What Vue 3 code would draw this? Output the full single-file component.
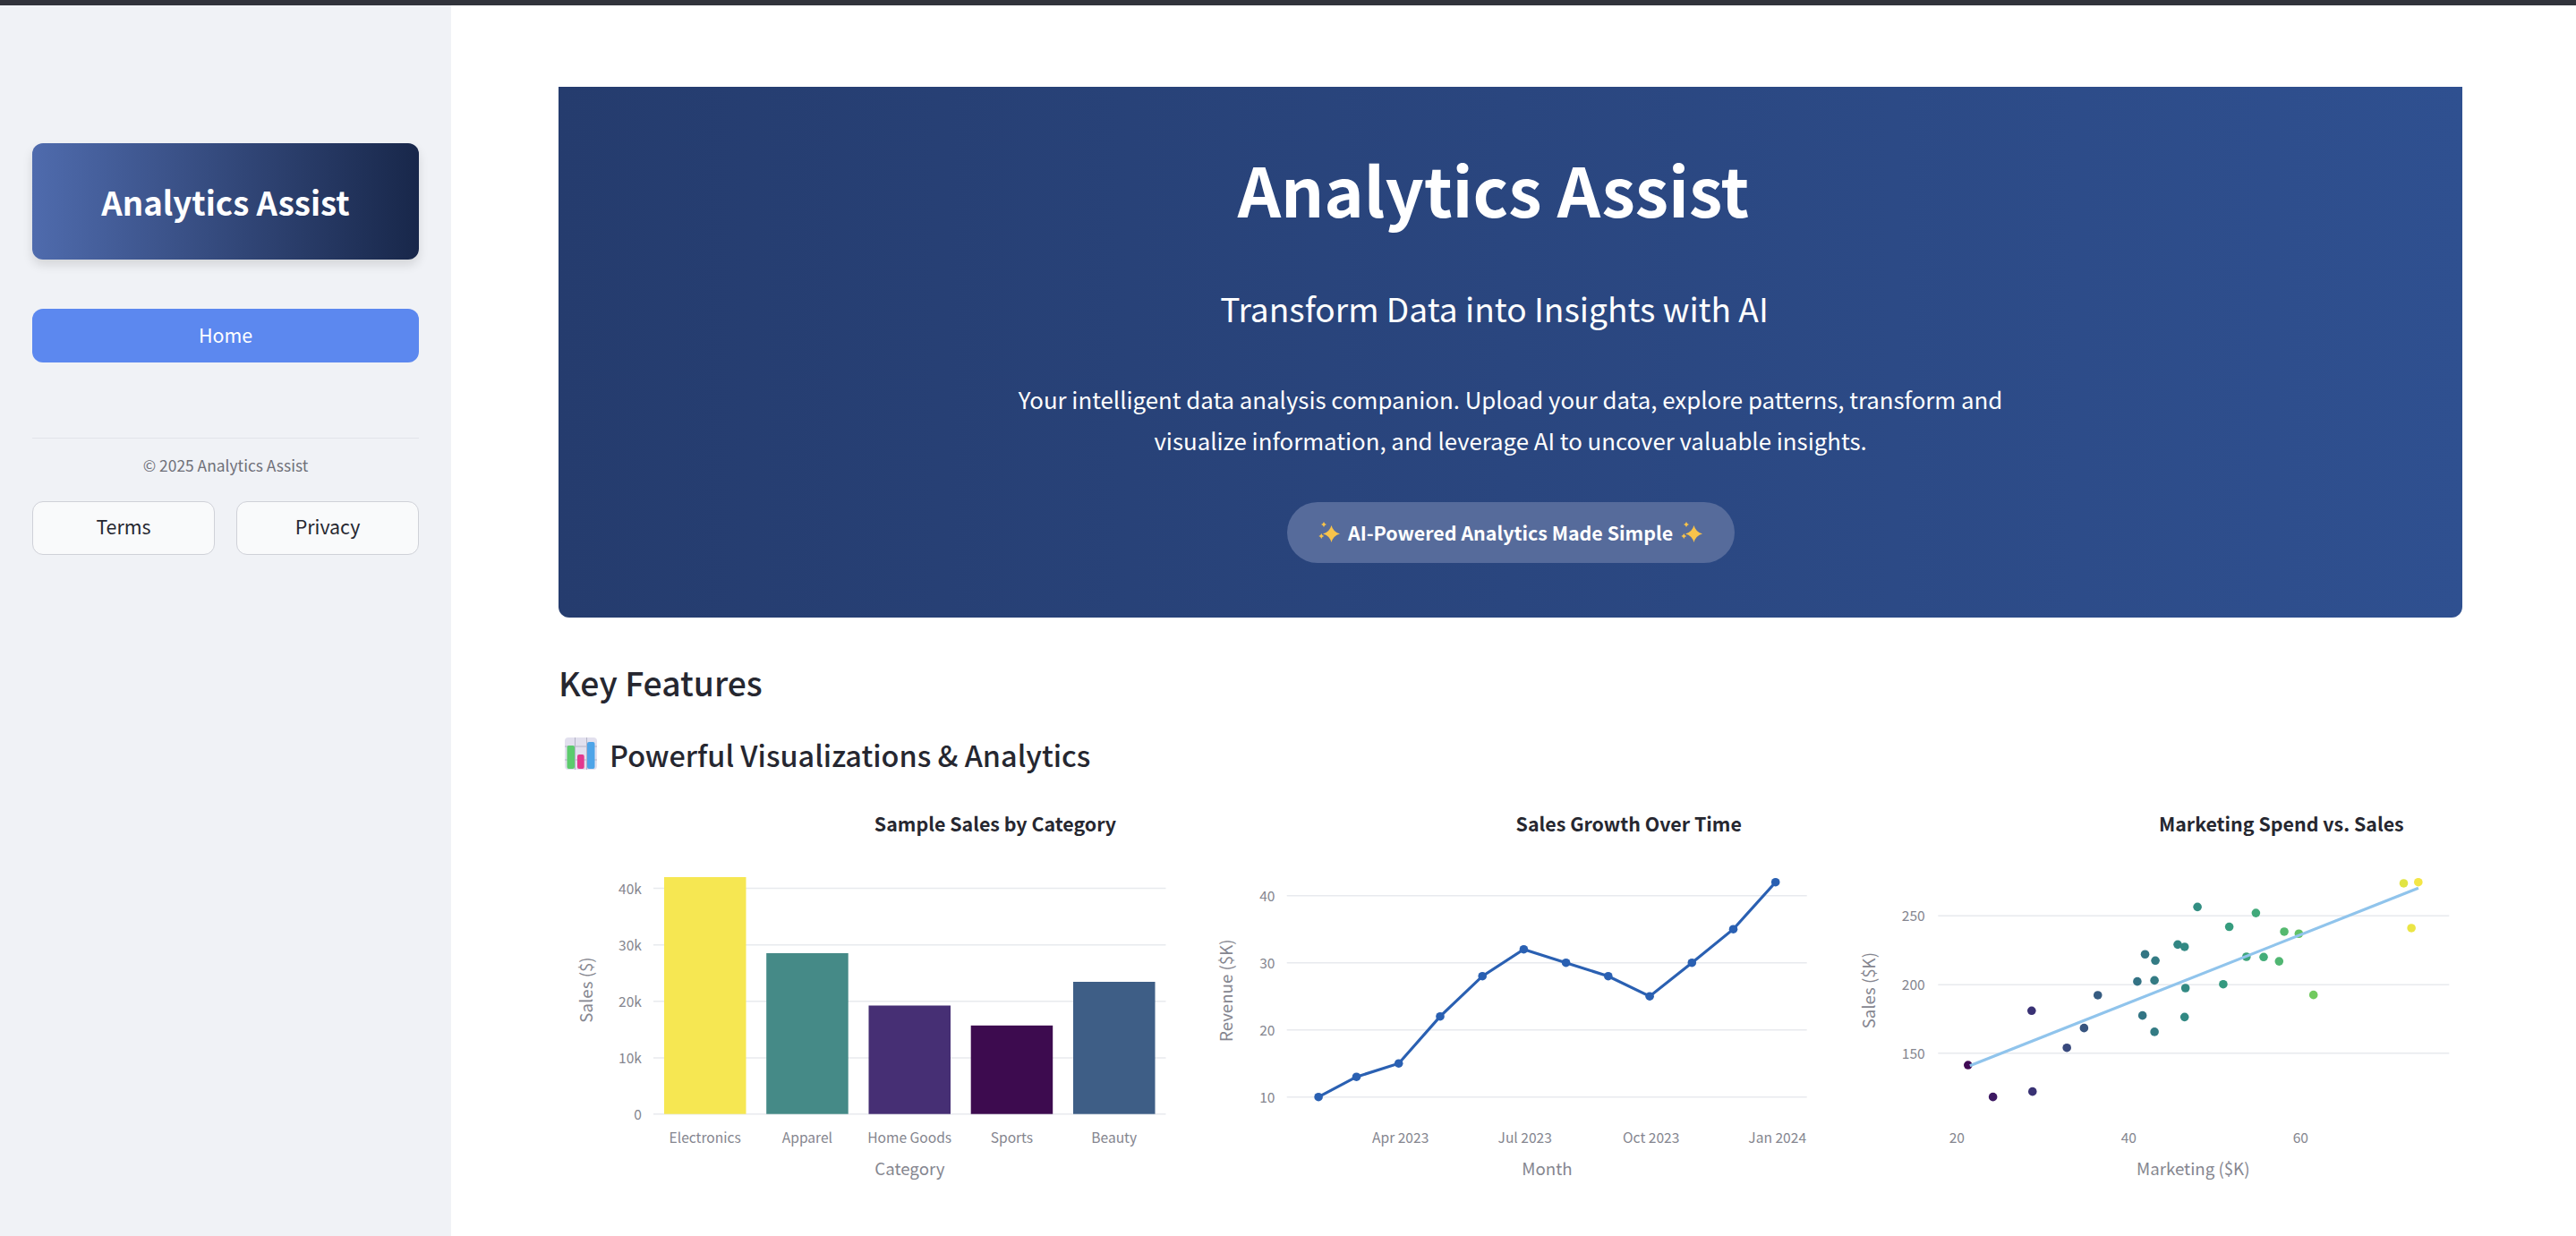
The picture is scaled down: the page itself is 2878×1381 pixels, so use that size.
<template>
  <div class="page">
    <div class="topbar"></div>
    <div class="shell">
      <aside class="sidebar">
        <div class="logo">Analytics Assist</div>
        <button class="nav-home">Home</button>
        <div class="side-foot">
          <p class="copy">© 2025 Analytics Assist</p>
          <div class="links">
            <button class="link-btn">Terms</button>
            <button class="link-btn">Privacy</button>
          </div>
        </div>
      </aside>

      <main class="main">
        <section class="hero">
          <h1>Analytics Assist</h1>
          <h2>Transform Data into Insights with AI</h2>
          <p>Your intelligent data analysis companion. Upload your data, explore patterns, transform and<br />visualize information, and leverage AI to uncover valuable insights.</p>
          <div class="pill">
            <svg class="spark" viewBox="0 0 24 23"><path v-for="(d, i) in sparkPaths" :key="i" :d="d" fill="#f8c34a" /></svg>
            <span>AI-Powered Analytics Made Simple</span>
            <svg class="spark" viewBox="0 0 24 23"><path v-for="(d, i) in sparkPaths" :key="i" :d="d" fill="#f8c34a" /></svg>
          </div>
        </section>

        <h3 class="key">Key Features</h3>
        <div class="sub">
          <svg class="sub-icon" viewBox="0 0 36 36">
            <rect width="36" height="36" rx="4" fill="#e2e0ee" />
            <path d="M0 10H36M0 25H36M11.5 0V36M24.5 0V36" stroke="#b4b4c6" stroke-width="1" />
            <rect x="2.5" y="9" width="8.5" height="26" rx="2" fill="#5ccb6d" />
            <rect x="14" y="19" width="7.7" height="16" rx="2" fill="#e2398f" />
            <rect x="25" y="5" width="8.5" height="30" rx="2" fill="#4ea4e8" />
          </svg>
          <span>Powerful Visualizations &amp; Analytics</span>
        </div>

        <div class="charts">
          <svg class="chart" viewBox="0 0 698.33 430">
            <text class="title" x="488" y="29.5">Sample Sales by Category</text>
            <line v-for="t in barTicks" :key="t.label" class="grid" x1="106" x2="678.5" :y1="t.y" :y2="t.y" />
            <text v-for="t in barTicks" :key="t.label + 't'" class="tick end" x="93" :y="t.y + 6">{{ t.label }}</text>
            <g v-for="b in bars" :key="b.label">
              <rect :x="b.x" :y="b.y" width="91.5" :height="344.7 - b.y" :fill="b.fill" />
              <text class="tick" :x="b.x + 45.7" y="377.5">{{ b.label }}</text>
            </g>
            <text class="axis" x="392.4" y="413">Category</text>
            <text class="axis" transform="translate(38 206) rotate(-90)">Sales ($)</text>
          </svg>

          <svg class="chart" viewBox="0 0 698.33 430">
            <text class="title" x="481.7" y="29.5">Sales Growth Over Time</text>
            <line v-for="t in lineTicks" :key="t.label" class="grid" x1="99.7" x2="680.7" :y1="t.y" :y2="t.y" />
            <text v-for="t in lineTicks" :key="t.label + 't'" class="tick end" x="86.5" :y="t.y + 6">{{ t.label }}</text>
            <polyline :points="linePoints" fill="none" stroke="#2a60b2" stroke-width="3.2" />
            <circle v-for="p in linePts" :key="p[0]" :cx="p[0]" :cy="p[1]" r="4.8" fill="#2a60b2" />
            <text v-for="t in monthTicks" :key="t.label" class="tick" :x="t.x" y="377.5">{{ t.label }}</text>
            <text class="axis" x="390.4" y="413">Month</text>
            <text class="axis" transform="translate(39 206.7) rotate(-90)">Revenue ($K)</text>
          </svg>

          <svg class="chart" viewBox="0 0 698.33 430">
            <text class="title" x="495.8" y="29.5">Marketing Spend vs. Sales</text>
            <line v-for="t in scatterTicks" :key="t.label" class="grid" x1="112.3" x2="683.3" :y1="t.y" :y2="t.y" />
            <text v-for="t in scatterTicks" :key="t.label + 't'" class="tick end" x="97.7" :y="t.y + 6">{{ t.label }}</text>
            <circle v-for="(d, i) in dots" :key="i" :cx="d.x" :cy="d.y" r="4.8" :fill="d.fill" />
            <line x1="147.8" y1="290.7" x2="648.9" y2="92.3" stroke="#90c4ec" stroke-width="3.2" />
            <text v-for="t in mktTicks" :key="t.label" class="tick" :x="t.x" y="377.5">{{ t.label }}</text>
            <text class="axis" x="397.3" y="413">Marketing ($K)</text>
            <text class="axis" transform="translate(42 206.7) rotate(-90)">Sales ($K)</text>
          </svg>
        </div>
      </main>
    </div>
  </div>
</template>

<script setup>
const sparkPaths = [
  'M14.5 4Q16.5 11.5 24 13.5Q16.5 15.5 14.5 23Q12.5 15.5 5 13.5Q12.5 11.5 14.5 4Z',
  'M6 0Q6.7 2.3 9 3Q6.7 3.7 6 6Q5.3 3.7 3 3Q5.3 2.3 6 0Z',
  'M3.3 13Q4 15.3 6.3 16Q4 16.7 3.3 19Q2.6 16.7 0.3 16Q2.6 15.3 3.3 13Z'
]

const barTicks = [
  { label: '40k', y: 92.6 },
  { label: '30k', y: 155.7 },
  { label: '20k', y: 218.8 },
  { label: '10k', y: 282 },
  { label: '0', y: 344.7 }
]
const bars = [
  { label: 'Electronics', x: 118, y: 80, fill: '#f6e752' },
  { label: 'Apparel', x: 232.2, y: 165, fill: '#458a87' },
  { label: 'Home Goods', x: 346.5, y: 223.5, fill: '#462f74' },
  { label: 'Sports', x: 460.7, y: 245.8, fill: '#3d0b4f' },
  { label: 'Beauty', x: 575, y: 197, fill: '#3e5e86' }
]

const lineTicks = [
  { label: '40', y: 100.7 },
  { label: '30', y: 175.7 },
  { label: '20', y: 250.7 },
  { label: '10', y: 325.7 }
]
const monthTicks = [
  { label: 'Apr 2023', x: 226.7 },
  { label: 'Jul 2023', x: 365.7 },
  { label: 'Oct 2023', x: 506.7 },
  { label: 'Jan 2024', x: 647.7 }
]
const revenue = [10, 13, 15, 22, 28, 32, 30, 28, 25, 30, 35, 42]
const monthX = [135.1, 177.5, 224.7, 271, 318.2, 364.4, 411.6, 458.8, 505.1, 552.3, 598.5, 645.7]
const linePts = revenue.map((v, i) => [monthX[i], 325.7 - (v - 10) * 7.5])
const linePoints = linePts.map((p) => p.join(',')).join(' ')

const scatterTicks = [
  { label: '250', y: 123.3 },
  { label: '200', y: 200.3 },
  { label: '150', y: 276.7 }
]
const mktTicks = [
  { label: '20', x: 133.3 },
  { label: '40', x: 325.3 },
  { label: '60', x: 517.3 }
]
const sales = [
  [21.3, 141.3], [24.2, 118.1], [28.7, 180.9], [28.8, 122], [32.8, 153.9], [34.8, 168.3],
  [36.4, 192.2], [41, 202.2], [41.6, 177.4], [41.9, 222], [43, 165.5], [43, 203],
  [43.1, 217.4], [45.7, 229.1], [46.5, 227.4], [46.5, 176.3], [46.6, 197.4], [48, 256.5],
  [51, 200.2], [51.7, 242], [53.7, 220.2], [54.8, 252.1], [55.7, 220], [57.5, 216.9],
  [58.1, 238.5], [59.8, 237], [61.5, 192.4], [72, 273.7], [72.9, 241.1], [73.7, 274.5]
]

const viridis = [
  [64, 10, 84], [58, 40, 112], [56, 74, 125], [52, 104, 132], [50, 130, 132],
  [50, 150, 128], [70, 175, 120], [118, 205, 92], [180, 222, 60], [244, 230, 70]
]
function viridisAt(t) {
  const pos = t * (viridis.length - 1)
  const i = Math.min(Math.floor(pos), viridis.length - 2)
  const f = pos - i
  const c = viridis[i].map((v, k) => Math.round(v + (viridis[i + 1][k] - v) * f))
  return `rgb(${c.join(',')})`
}
const dots = sales.map(([m, s]) => ({
  x: 133.3 + (m - 20) * 9.6,
  y: 123.3 + (250 - s) * 1.534,
  fill: viridisAt((m - 21.3) / (73.7 - 21.3))
}))
</script>

<style>
html,
body {
  margin: 0;
  background: #fff;
  overflow: hidden;
}
</style>

<style scoped>
.page {
  height: 100vh;
  display: flex;
  flex-direction: column;
  font-family: "Noto Sans CJK SC", "Noto Sans", sans-serif;
  color: #262730;
}

.topbar {
  height: 6px;
  flex: none;
  background: #31333b;
}

.shell {
  flex: 1;
  display: flex;
  min-height: 0;
}

.sidebar {
  width: 504px;
  flex: none;
  box-sizing: border-box;
  padding: 154px 36px 0;
  background: #f0f2f6;
}

.logo {
  height: 130px;
  display: flex;
  align-items: center;
  justify-content: center;
  border-radius: 12px;
  background: linear-gradient(90deg, #4f6bad, #18274a);
  box-shadow: 0 6px 12px rgba(0, 0, 0, 0.12);
  color: #fff;
  font-size: 36.6px;
  font-weight: 700;
}

button {
  font-family: inherit;
  cursor: pointer;
}

.nav-home {
  display: block;
  width: 100%;
  height: 60px;
  margin-top: 55px;
  padding-bottom: 4px;
  border: 0;
  border-radius: 12px;
  background: #5c88ef;
  color: #fff;
  font-size: 21.4px;
  line-height: 1;
}

.side-foot {
  margin-top: 84px;
  border-top: 1px solid #e2e4ea;
}

.copy {
  margin: 16px 0 0;
  height: 28px;
  line-height: 28px;
  text-align: center;
  font-size: 17.4px;
  color: #6f7079;
}

.links {
  display: flex;
  gap: 24px;
  margin-top: 26px;
}

.link-btn {
  flex: 1;
  height: 60px;
  padding-bottom: 7px;
  border: 1px solid #cfd1d8;
  border-radius: 12px;
  background: #f9fafb;
  color: #262730;
  font-size: 21.4px;
}

.main {
  flex: 1;
  min-width: 0;
  box-sizing: border-box;
  padding: 91px 127px 0 120px;
}

.hero {
  height: 593px;
  box-sizing: border-box;
  padding-top: 64px;
  border-radius: 0 0 12px 12px;
  background: linear-gradient(90deg, #253c6e, #2f5090);
  color: #fff;
  text-align: center;
}

.hero h1 {
  margin: 0;
  padding-right: 38px;
  height: 100px;
  line-height: 100px;
  font-size: 75.4px;
  font-weight: 700;
}

.hero h2 {
  margin: 53px 0 0;
  padding-right: 36px;
  height: 60px;
  line-height: 60px;
  font-size: 37.1px;
  font-weight: 400;
}

.hero p {
  margin: 49px 0 0;
  line-height: 45.5px;
  font-size: 25.8px;
}

.pill {
  display: flex;
  align-items: center;
  justify-content: center;
  gap: 9px;
  width: 500px;
  height: 68px;
  margin: 47px auto 0;
  padding-bottom: 2px;
  box-sizing: border-box;
  border-radius: 34px;
  background: #566b9b;
  font-size: 21.4px;
  font-weight: 700;
}

.spark {
  width: 24px;
  height: 23px;
}

.key {
  margin: 44px 0 0;
  height: 56px;
  line-height: 56px;
  font-size: 37.3px;
  font-weight: 500;
}

.sub {
  display: flex;
  align-items: center;
  gap: 14px;
  margin-top: 30px;
  padding-left: 7px;
  height: 44px;
  font-size: 32.4px;
  font-weight: 500;
}

.sub-icon {
  width: 36px;
  height: 36px;
  flex: none;
}

.charts {
  display: flex;
  gap: 16px;
  margin-top: 36px;
}

.chart {
  flex: 1;
  min-width: 0;
  height: 430px;
  font-family: "Noto Sans CJK SC", "Noto Sans", sans-serif;
}

.grid {
  stroke: #e8eaee;
  stroke-width: 1.5;
}

.title {
  text-anchor: middle;
  font-size: 21.4px;
  font-weight: 700;
  fill: #262730;
}

.tick {
  text-anchor: middle;
  font-size: 15.6px;
  fill: #85868f;
}

.tick.end {
  text-anchor: end;
}

.axis {
  text-anchor: middle;
  font-size: 18.7px;
  fill: #85868f;
}
</style>
